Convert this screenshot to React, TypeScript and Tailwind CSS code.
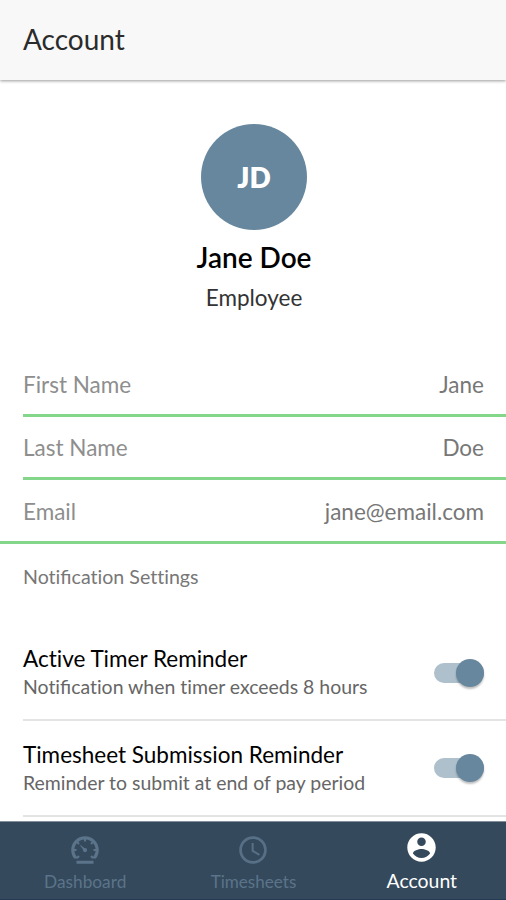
import type { ReactNode } from "react";
import { IoMdContact, IoMdSpeedometer, IoMdTime } from "react-icons/io";

function Field({ label, value, full }: { label: string; value: string; full?: boolean }) {
  return (
    <div className={full ? "shrink-0 border-b-[3px] border-[#84d68a] pl-[23px]" : "ml-[23px] shrink-0 border-b-[3px] border-[#84d68a]"}>
      <div className="flex h-[60.3px] items-center justify-between pt-[2px] pr-[22px] text-[22.5px]">
        <span className="text-[#8e8e8e]">{label}</span>
        <span className="text-[#777777]">{value}</span>
      </div>
    </div>
  );
}

function Notification() {
  return (
    <>
      Noti<span className="[font-variant-ligatures:normal]">fi</span>cation
    </>
  );
}

function Setting({ title, note }: { title: string; note: ReactNode }) {
  return (
    <div className="ml-[23px] flex h-[95.3px] shrink-0 items-center justify-between border-b-2 border-[#e2e3e5] pr-[22px]">
      <div>
        <div className="text-[22.5px] leading-[28px] text-black">{title}</div>
        <div className="text-[19.45px] leading-[27px] text-[#666]">{note}</div>
      </div>
      <div className="flex h-[20px] w-[50px] items-center justify-end rounded-full bg-[#aec0cc]">
        <div className="size-[28px] shrink-0 rounded-full bg-[#66879e] shadow-[0_2px_2px_rgba(0,0,0,0.25)]" />
      </div>
    </div>
  );
}

export default function App() {
  return (
    <div className="flex h-[900px] w-[506px] flex-col overflow-hidden bg-white font-['Lato',sans-serif] [font-variant-ligatures:none]">
      <header className="flex h-[80px] shrink-0 items-center bg-[#f8f8f8] pb-[2px] pl-[23px] text-[28px] text-[#2b2b2b] shadow-[0_1px_3px_rgba(0,0,0,0.4)]">Account</header>
      <section className="flex h-[273.7px] shrink-0 flex-col items-center pt-[44px] pl-[2px]">
        <div className="flex size-[106px] items-center justify-center rounded-full bg-[#66879e] text-[28px] font-extrabold text-white">JD</div>
        <div className="mt-[7px] text-[28px] leading-[40px] font-semibold text-black">Jane Doe</div>
        <div className="mt-[1px] text-[22.5px] leading-[40px] text-[#333]">Employee</div>
      </section>
      <Field label="First Name" value="Jane" />
      <Field label="Last Name" value="Doe" />
      <Field label="Email" value="jane@email.com" full />
      <div className="h-[82.6px] shrink-0 pt-[18px] pl-[23px] text-[19.6px] text-[#777]">
        <Notification /> Settings
      </div>
      <Setting title="Active Timer Reminder" note={<><Notification /> when timer exceeds 8 hours</>} />
      <Setting title="Timesheet Submission Reminder" note="Reminder to submit at end of pay period" />
      <nav className="mt-auto grid h-[79px] shrink-0 grid-cols-3 border-t border-b border-t-[#83909c] border-b-[#263a54] bg-[#34495c] pl-[1px] text-[#5b7489]">
        <div className="flex flex-col items-center pt-[11px]">
          <IoMdSpeedometer className="size-[34px]" />
          <span className="mt-[2px] text-[17.3px] leading-[26px]">Dashboard</span>
        </div>
        <div className="flex flex-col items-center pt-[11px]">
          <IoMdTime className="size-[34px]" />
          <span className="mt-[2px] text-[17.1px] leading-[26px]">Timesheets</span>
        </div>
        <div className="flex flex-col items-center pt-[8px] text-white">
          <IoMdContact className="size-[35px]" />
          <span className="mt-[3px] text-[19.4px] leading-[26px]">Account</span>
        </div>
      </nav>
    </div>
  );
}
